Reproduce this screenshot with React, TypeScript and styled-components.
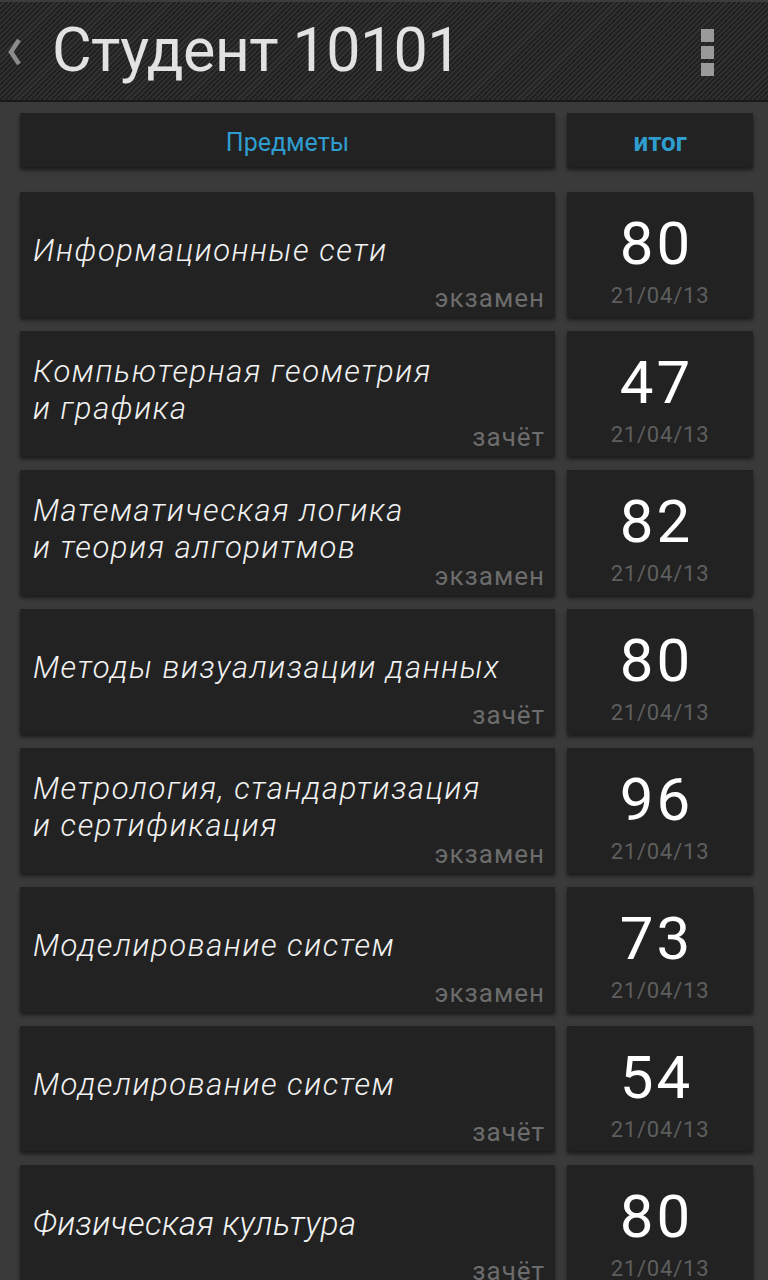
import React from "react";
import styled, { createGlobalStyle } from "styled-components";

const Global = createGlobalStyle`
  html, body { margin: 0; padding: 0; background: #3a3a3a; }
  body { font-family: Roboto, "Noto Sans", sans-serif; }
  * { box-sizing: border-box; }
`;

const Screen = styled.div`
  width: 768px;
  height: 1280px;
  overflow: hidden;
  background: #3a3a3a;
  display: flex;
  flex-direction: column;
`;

const ActionBar = styled.header`
  height: 102px;
  flex: none;
  display: flex;
  align-items: center;
  border-top: 2px solid #3c3c3c;
  border-bottom: 2px solid #191919;
  background-color: #222222;
  background-image: repeating-linear-gradient(
    135deg,
    #212121 0px,
    #212121 2.1px,
    #323232 2.1px,
    #323232 3.6px
  );
  padding: 0 0 0 7px;
`;

const Back = styled.div`
  width: 18px;
  height: 30px;
  display: flex;
  align-items: center;
  margin-top: 2px;
`;

const Title = styled.h1`
  margin: -2px 0 0 27px;
  font-family: Roboto, sans-serif;
  font-weight: 400;
  font-size: 61px;
  letter-spacing: -0.6px;
  color: #e2e2e2;
  flex: 1;
  line-height: 1;
`;

const Overflow = styled.div`
  width: 13px;
  margin-right: 54px;
  display: flex;
  flex-direction: column;
  gap: 4px;
  margin-top: 2px;
`;

const Dot = styled.span`
  display: block;
  width: 13px;
  height: 13px;
  background: #9a9a9a;
`;

const Content = styled.main`
  padding: 11px 15px 0 20px;
  display: flex;
  flex-direction: column;
`;

const Row = styled.div`
  display: grid;
  grid-template-columns: 535px 186px;
  column-gap: 12px;
`;

const TabRow = styled(Row)`
  margin-bottom: 25px;
`;

const Tab = styled.div<{ $bold?: boolean }>`
  height: 54px;
  background: #222222;
  box-shadow: 0 3px 4px rgba(0, 0, 0, 0.55);
  display: flex;
  align-items: center;
  justify-content: center;
  color: #2f9dcf;
  font-size: ${(p) => (p.$bold ? "26px" : "25px")};
  font-weight: ${(p) => (p.$bold ? 700 : 400)};
  padding-top: 4px;
`;

const List = styled.div`
  display: flex;
  flex-direction: column;
  gap: 14px;
`;

const Card = styled.div`
  height: 125px;
  background: #222222;
  box-shadow: 0 3px 4px rgba(0, 0, 0, 0.55);
  position: relative;
`;

const SubjectCard = styled(Card)`
  display: flex;
  align-items: center;
  padding: 0 10px 8px 13px;
`;

const SubjectName = styled.div<{ $condensed?: boolean }>`
  font-family: Roboto, sans-serif;
  font-style: italic;
  font-weight: 300;
  font-size: ${(p) => (p.$condensed ? "33px" : "31px")};
  line-height: 37px;
  letter-spacing: ${(p) => (p.$condensed ? "0.4px" : "1.6px")};
  color: #f2f2f2;
`;

const Kind = styled.span`
  position: absolute;
  right: 10px;
  bottom: 6px;
  font-size: 26px;
  letter-spacing: 1px;
  color: #6c6c6c;
  line-height: 1;
`;

const ScoreCard = styled(Card)`
  display: flex;
  flex-direction: column;
  align-items: center;
  padding-top: 24px;
`;

const Score = styled.div`
  font-size: 60px;
  line-height: 56px;
  letter-spacing: 3px;
  margin-right: 7px;
  color: #ffffff;
  font-weight: 400;
`;

const DateText = styled.div`
  margin-top: 12px;
  font-size: 22px;
  letter-spacing: 0.8px;
  color: #5e5e5e;
  line-height: 24px;
`;

type Item = {
  name: string[];
  kind: string;
  score: number;
  condensed?: boolean;
};

const items: Item[] = [
  { name: ["Информационные сети"], kind: "экзамен", score: 80 },
  { name: ["Компьютерная геометрия", "и графика"], kind: "зачёт", score: 47 },
  { name: ["Математическая логика", "и теория алгоритмов"], kind: "экзамен", score: 82 },
  { name: ["Методы визуализации данных"], kind: "зачёт", score: 80 },
  { name: ["Метрология, стандартизация", "и сертификация"], kind: "экзамен", score: 96 },
  { name: ["Моделирование систем"], kind: "экзамен", score: 73 },
  { name: ["Моделирование систем"], kind: "зачёт", score: 54 },
  { name: ["Физическая культура"], kind: "зачёт", score: 80, condensed: true },
];

export default function App() {
  return (
    <Screen>
      <Global />
      <ActionBar>
        <Back>
          <svg width="16" height="28" viewBox="0 0 16 28">
            <path d="M12 2 L4 14 L12 26" stroke="#8c8c8c" strokeWidth="4.5" fill="none" strokeLinejoin="miter" />
          </svg>
        </Back>
        <Title>Студент 10101</Title>
        <Overflow>
          <Dot />
          <Dot />
          <Dot />
        </Overflow>
      </ActionBar>
      <Content>
        <TabRow>
          <Tab>Предметы</Tab>
          <Tab $bold>итог</Tab>
        </TabRow>
        <List>
          {items.map((it, i) => (
            <Row key={i}>
              <SubjectCard>
                <SubjectName $condensed={it.condensed}>
                  {it.name.map((l, j) => (
                    <div key={j}>{l}</div>
                  ))}
                </SubjectName>
                <Kind>{it.kind}</Kind>
              </SubjectCard>
              <ScoreCard>
                <Score>{it.score}</Score>
                <DateText>21/04/13</DateText>
              </ScoreCard>
            </Row>
          ))}
        </List>
      </Content>
    </Screen>
  );
}
